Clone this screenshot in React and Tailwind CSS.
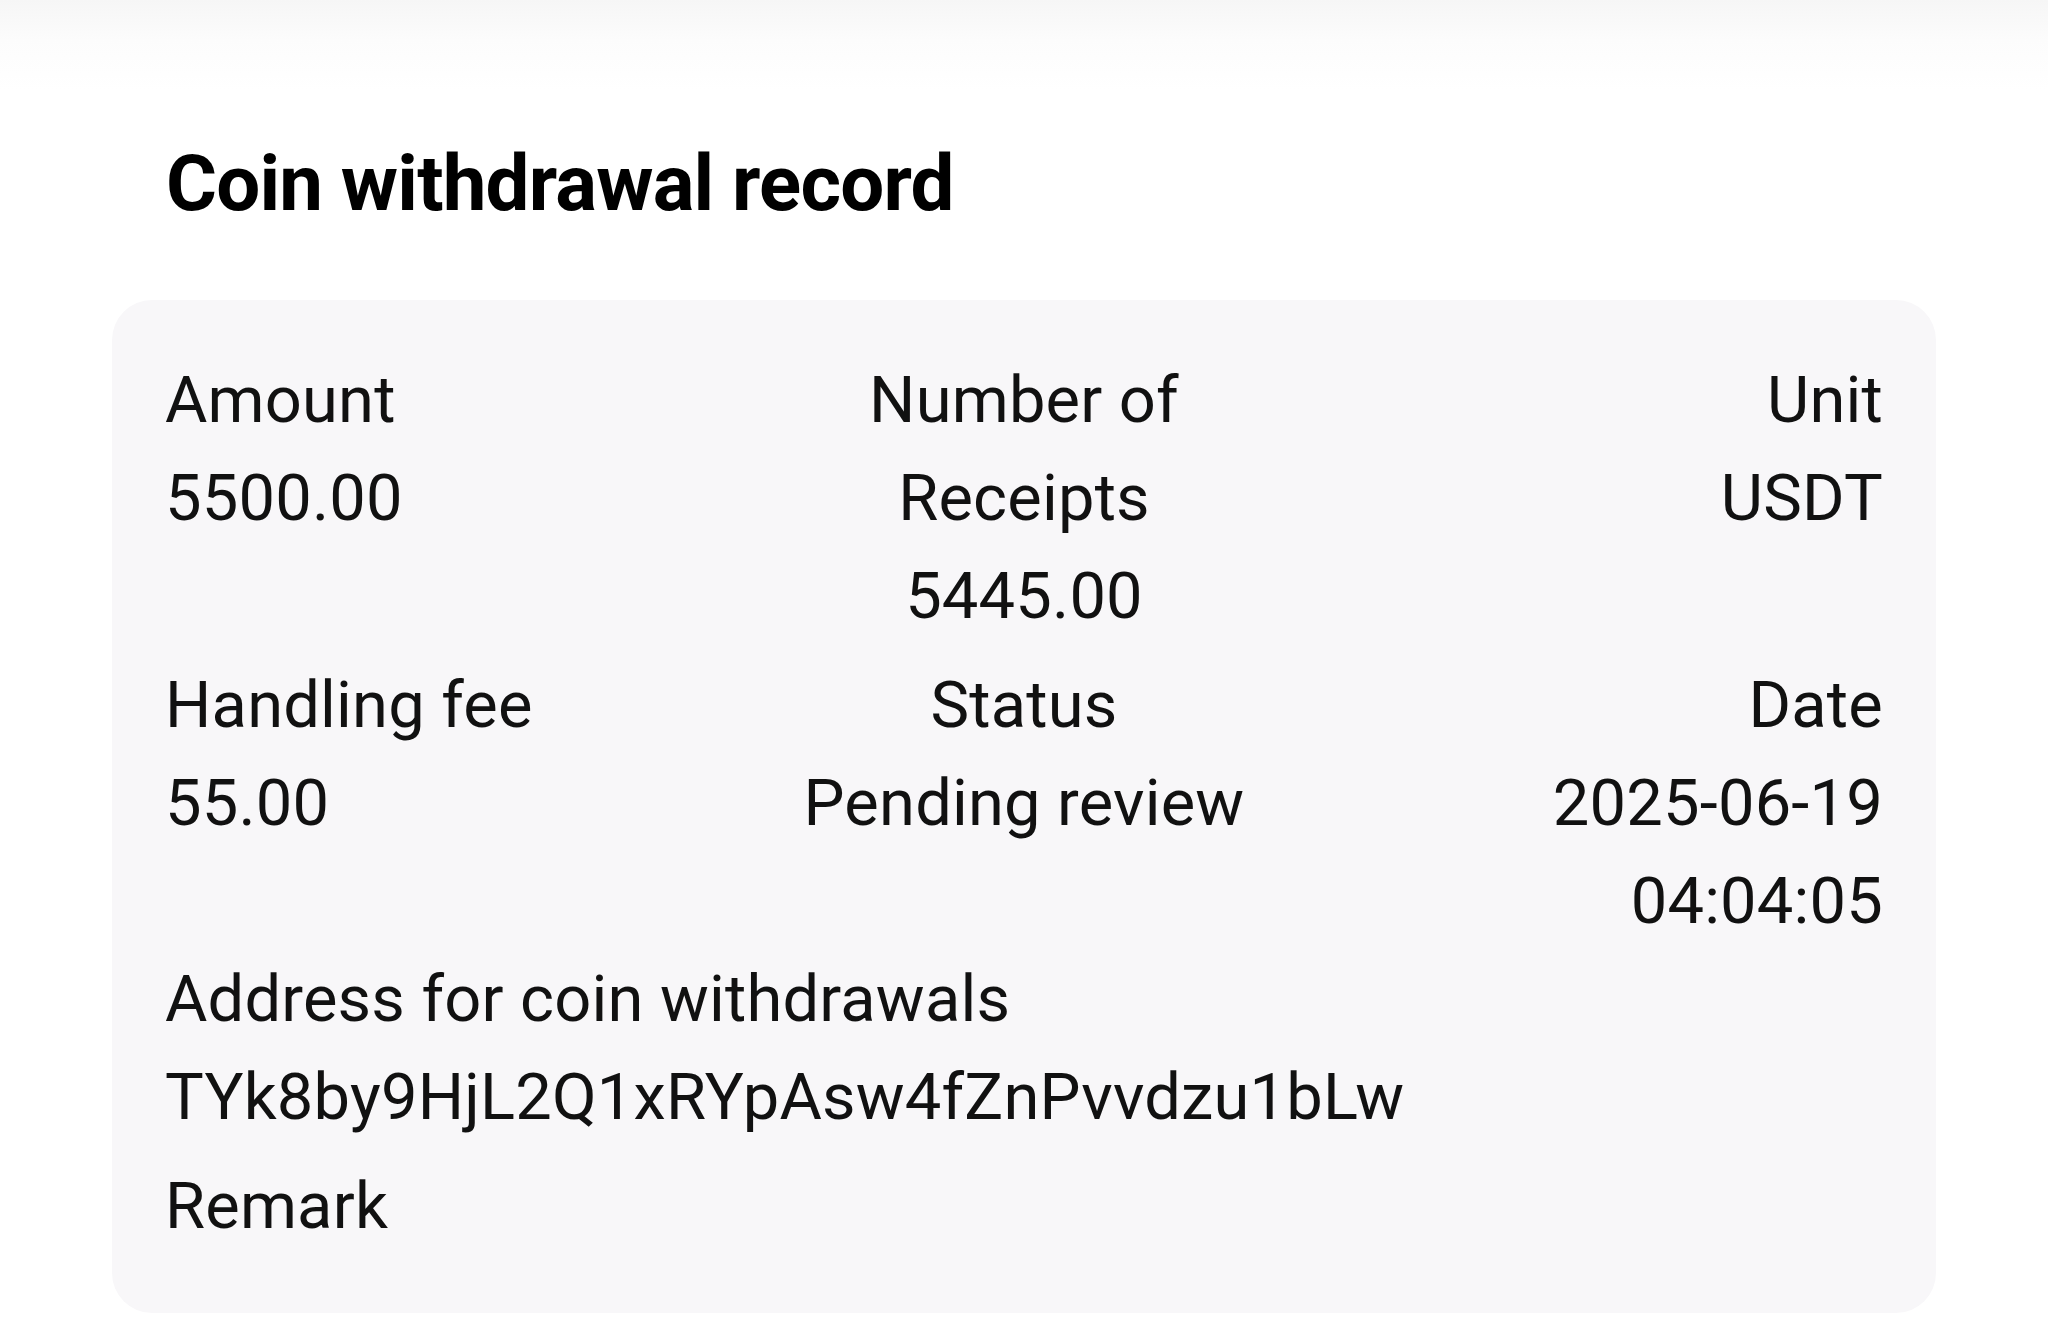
import React from "react";

function Cell({ label, value, align }) {
  return (
    <div className={align}>
      <div>{label}</div>
      <div>{value}</div>
    </div>
  );
}

export default function App() {
  return (
    <div
      className="min-h-[1323px] w-full bg-[linear-gradient(to_bottom,#f6f6f6_0px,#fcfcfc_40px,#ffffff_90px)] px-[112px] pt-[136px] pb-[10px] text-[#111111]"
      style={{ fontFamily: "Roboto, 'Noto Sans', Arial, sans-serif" }}
    >
      <h1 className="ml-[54px] text-[78px] font-bold leading-[96px] tracking-[-0.8px] text-black">
        Coin withdrawal record
      </h1>
      <div className="mt-[68px] rounded-[40px] bg-[#f8f7f9] px-[53px] pt-[51px] pb-[58px] text-[65px] leading-[98px] tracking-[0.2px]">
        <div className="mb-[11px] grid grid-cols-3">
          <Cell label="Amount" value="5500.00" align="text-left" />
          <Cell label="Number of Receipts" value="5445.00" align="text-center" />
          <Cell label="Unit" value="USDT" align="text-right" />
        </div>
        <div className="grid grid-cols-3">
          <Cell label="Handling fee" value="55.00" align="text-left" />
          <Cell label="Status" value="Pending review" align="text-center" />
          <Cell label="Date" value="2025-06-19 04:04:05" align="text-right" />
        </div>
        <div className="mb-[11px]">
          <div>Address for coin withdrawals</div>
          <div>TYk8by9HjL2Q1xRYpAsw4fZnPvvdzu1bLw</div>
        </div>
        <div>Remark</div>
      </div>
    </div>
  );
}
